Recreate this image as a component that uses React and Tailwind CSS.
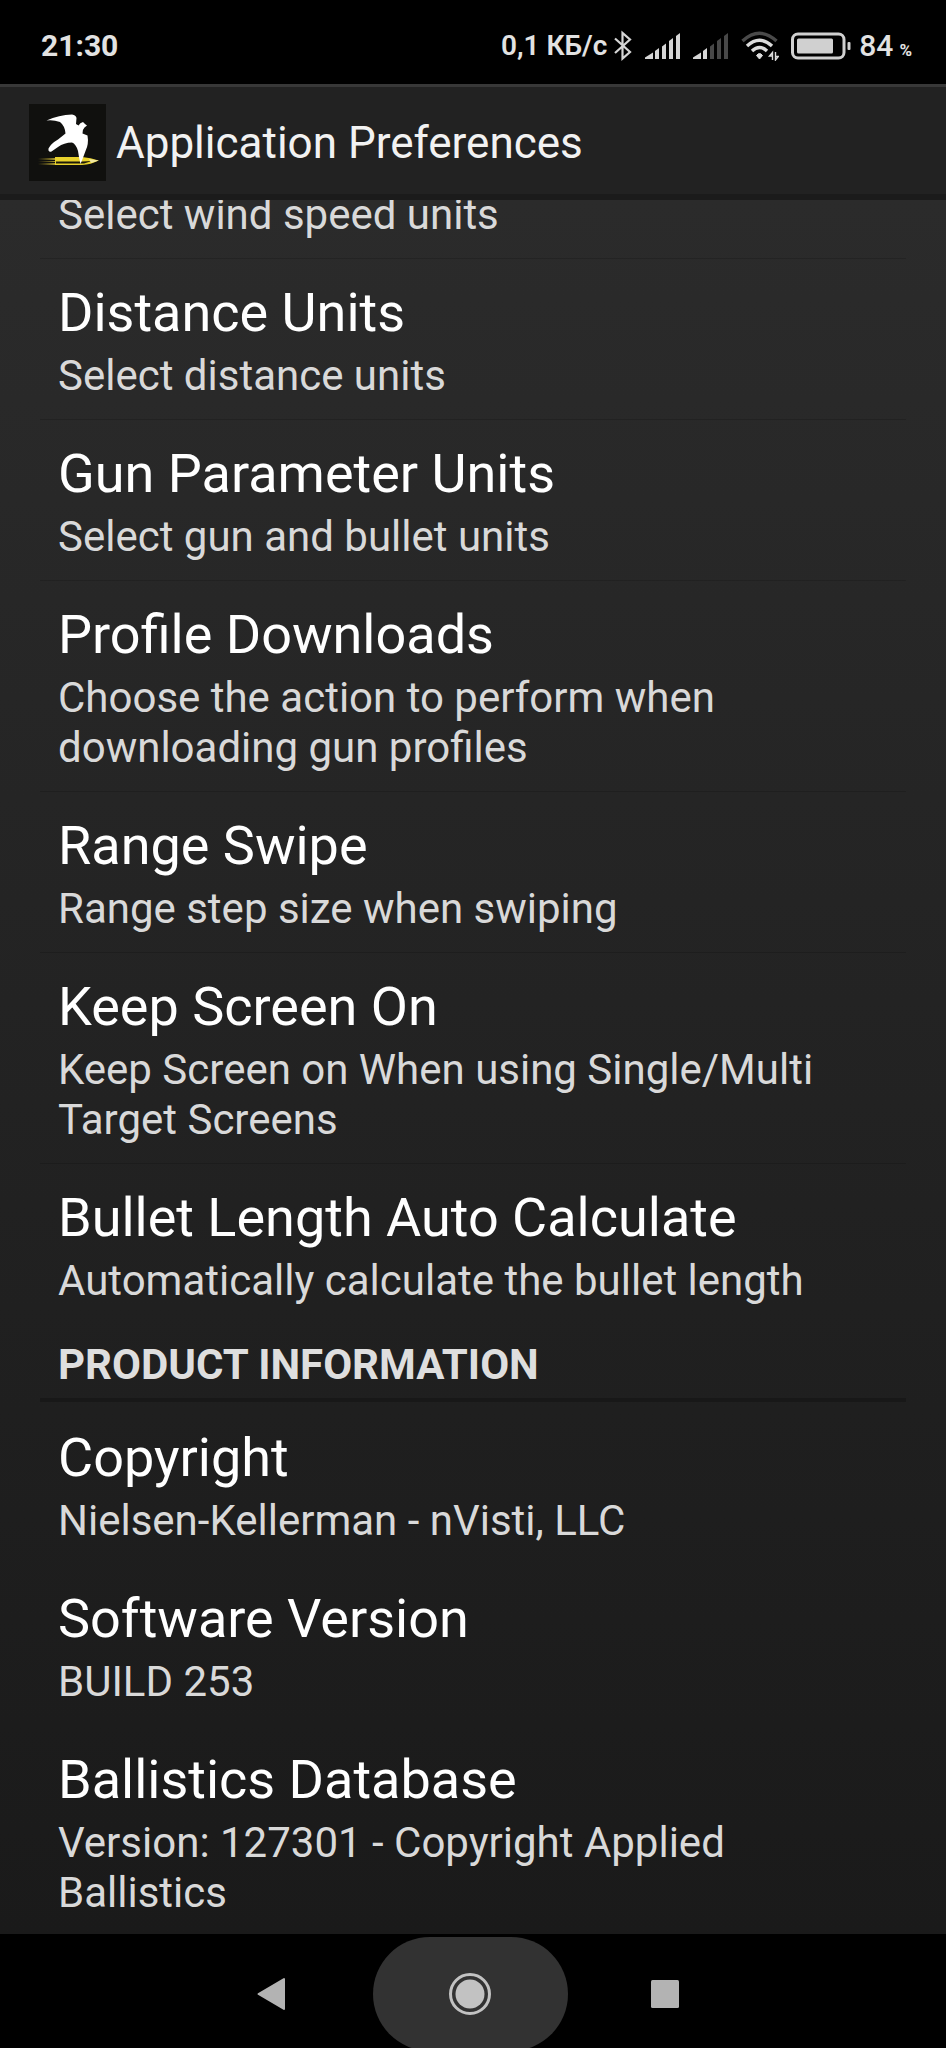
import React from 'react';

const preferences = [
  { title: 'Distance Units', summary: 'Select distance units' },
  { title: 'Gun Parameter Units', summary: 'Select gun and bullet units' },
  { title: 'Profile Downloads', summary: 'Choose the action to perform when downloading gun profiles' },
  { title: 'Range Swipe', summary: 'Range step size when swiping' },
  { title: 'Keep Screen On', summary: 'Keep Screen on When using Single/Multi Target Screens' },
  { title: 'Bullet Length Auto Calculate', summary: 'Automatically calculate the bullet length' },
];

const productInfo = [
  { title: 'Copyright', summary: 'Nielsen-Kellerman - nVisti, LLC' },
  { title: 'Software Version', summary: 'BUILD 253' },
  { title: 'Ballistics Database', summary: 'Version: 127301 - Copyright Applied Ballistics' },
];

const BluetoothIcon = () => (
  <svg width="20" height="32" viewBox="0 0 20 32" fill="none" stroke="#d6d6d6" strokeWidth="2.2" strokeLinejoin="miter">
    <path d="M2 8.5 L17 22 L9.5 28.5 V3 L17 9.5 L2 23" />
  </svg>
);

const SignalIcon = ({ bars }) => {
  const shapes = [
    'M0 27 V25.5 L8 20.5 V27 Z',
    'M10 27 V19 L14 16 V27 Z',
    'M17 27 V14.5 L21 11.5 V27 Z',
    'M24 27 V9 L28 6 V27 Z',
    'M31 27 V4 L35 1 V27 Z',
  ];
  return (
    <svg width="36" height="28" viewBox="0 0 36 28">
      {shapes.map((d, index) => (
        <path key={d} d={d} fill={index < bars ? '#d6d6d6' : '#484848'} />
      ))}
    </svg>
  );
};

const WifiIcon = () => (
  <svg width="38" height="30" viewBox="0 0 38 30" fill="none" strokeWidth="3.4">
    <path d="M1.5 10 Q18.5 -5.5 35.5 10" stroke="#4a4a4a" />
    <path d="M6 15 Q18.5 3.5 31 15" stroke="#dcdcdc" />
    <path d="M11 20 Q18.5 13 26 20" stroke="#dcdcdc" />
    <path d="M15.5 24.5 Q18.5 20.5 21.5 24.5 L18.5 28 Z" fill="#dcdcdc" stroke="#dcdcdc" strokeWidth="1" />
    <path d="M31.5 29 V21.5 L28.5 25 H31.5 M34.5 21 V29 L37.3 25.5 H34.5" stroke="#dcdcdc" strokeWidth="1.4" />
  </svg>
);

const BatteryIcon = () => (
  <svg width="60" height="28" viewBox="0 0 60 28" fill="none">
    <rect x="1.5" y="2" width="51.5" height="24" rx="5.5" stroke="#d0d0d0" strokeWidth="3" />
    <rect x="6" y="6.5" width="36" height="15" rx="1.5" fill="#d0d0d0" />
    <rect x="56.5" y="10" width="3" height="8" rx="1" fill="#d0d0d0" />
  </svg>
);

const AppLogo = () => (
  <svg className="shrink-0" width="77" height="77" viewBox="0 0 77 77">
    <defs>
      <linearGradient id="trail" x1="0" x2="1" y1="0" y2="0">
        <stop offset="0" stopColor="#8a7a20" stopOpacity="0" />
        <stop offset="1" stopColor="#b5a232" />
      </linearGradient>
    </defs>
    <rect width="77" height="77" fill="#10100e" />
    <rect x="9" y="54" width="18" height="2" fill="url(#trail)" />
    <rect x="9" y="57" width="18" height="1" fill="url(#trail)" />
    <rect x="9" y="59" width="18" height="2" fill="url(#trail)" />
    <path d="M26 53 H53 Q62 53.5 69.5 56.5 Q62 60.5 53 61 H26 Z" fill="#e9d22c" />
    <path d="M27 57.5 H53 L63 57 L55 59.5 H27 Z" fill="#1d1a08" />
    <path d="M60 55 L70 56.5 L62 59 Z" fill="#f0e7a0" />
    <path d="M17.5 16.5 Q30 11 43 10.5 Q47 11 47.5 14 L47 20 L49.5 21.5 Q51 18.5 54 18 L56 20 L58 21.5 L55.5 23.5 Q53 26 53.5 29.5 L58.5 31.5 Q60 40 56.5 47 Q54 54 51.5 60 Q50 54 49 47 Q47 40 43 38.5 Q35 38.5 29 43 L22.5 47.5 Q19 48.5 19.5 44.5 Q22 39.5 29 35.5 L36.5 29.5 Q36 22 31 18 Q24 15.5 17.5 16.5 Z" fill="#fff" />
  </svg>
);

const StatusBar = () => (
  <div className="flex h-[84px] shrink-0 items-center justify-between bg-black pl-[41px] pr-[34px] pt-2 text-[28px] font-medium leading-none text-[#e2e2e2]">
    <span className="text-[30px] font-bold">21:30</span>
    <div className="flex items-center">
      <span className="font-semibold">0,1 КБ/с</span>
      <div className="ml-1.5 flex items-center gap-3">
        <BluetoothIcon />
        <SignalIcon bars={5} />
        <SignalIcon bars={2} />
        <WifiIcon />
        <BatteryIcon />
      </div>
      <span className="ml-2 text-[30px]">84</span>
      <span className="ml-1.5 mt-2 text-[17px] font-bold">%</span>
    </div>
  </div>
);

const PreferenceRow = ({ title, summary, divider = false }) => (
  <li className={`border-b px-[18px] pb-[18px] last:border-b-0 last:pb-4 ${divider ? 'border-black/15' : 'border-transparent'}`}>
    {title && <h2 className="mb-1.5 pt-[22px] text-[54px] leading-[64px] text-white">{title}</h2>}
    <p className="text-[42px] leading-[50px] text-[#d9d9d9]">{summary}</p>
  </li>
);

const NavBar = () => (
  <nav className="flex h-[114px] shrink-0 justify-center overflow-hidden bg-black pr-1.5 pt-[3px]">
    <button type="button" aria-label="Back" className="flex h-[114px] w-[195px] items-center justify-center">
      <svg width="36" height="34" viewBox="0 0 36 34">
        <path d="M1.5 17 L27 2 V32 Z" fill="#b3b3b3" stroke="#b3b3b3" strokeWidth="2" strokeLinejoin="round" />
      </svg>
    </button>
    <button type="button" aria-label="Home" className="flex h-[114px] w-[195px] items-center justify-center rounded-full bg-[#323232]">
      <svg width="44" height="44" viewBox="0 0 44 44">
        <circle cx="22" cy="22" r="19.5" fill="none" stroke="#c2c2c2" strokeWidth="3" />
        <circle cx="22" cy="22" r="14.5" fill="#c2c2c2" />
      </svg>
    </button>
    <button type="button" aria-label="Recent apps" className="flex h-[114px] w-[195px] items-center justify-center">
      <svg width="28" height="28" viewBox="0 0 28 28">
        <rect width="28" height="28" rx="1.5" fill="#b3b3b3" />
      </svg>
    </button>
  </nav>
);

const App = () => (
  <div className="flex h-screen w-full flex-col bg-black font-['Roboto',sans-serif]">
    <StatusBar />

    <header className="flex h-[116px] shrink-0 items-center border-b-[6px] border-t-[3px] border-b-[#1b1b1b] border-t-[#383838] bg-[#222222] px-[29px] pt-1">
      <AppLogo />
      <h1 className="ml-2.5 text-[44px] leading-[50px] text-[#f2f2f2]">Application Preferences</h1>
    </header>

    <main className="flex min-h-0 flex-1 flex-col justify-end overflow-hidden bg-linear-to-b from-[#2b2b2b] to-[#1a1a1a] px-10">
      <ul>
        <PreferenceRow summary="Select wind speed units" divider />
        {preferences.map((item) => (
          <PreferenceRow key={item.title} title={item.title} summary={item.summary} divider />
        ))}
      </ul>

      <h2 className="mb-0.5 border-b-4 border-[#181818] px-[18px] pb-2 pt-[18px] text-[42px] font-bold leading-[50px] text-[#dedede]">PRODUCT INFORMATION</h2>

      <ul>
        {productInfo.map((item) => (
          <PreferenceRow key={item.title} title={item.title} summary={item.summary} />
        ))}
      </ul>
    </main>

    <NavBar />
  </div>
);

export default App;
